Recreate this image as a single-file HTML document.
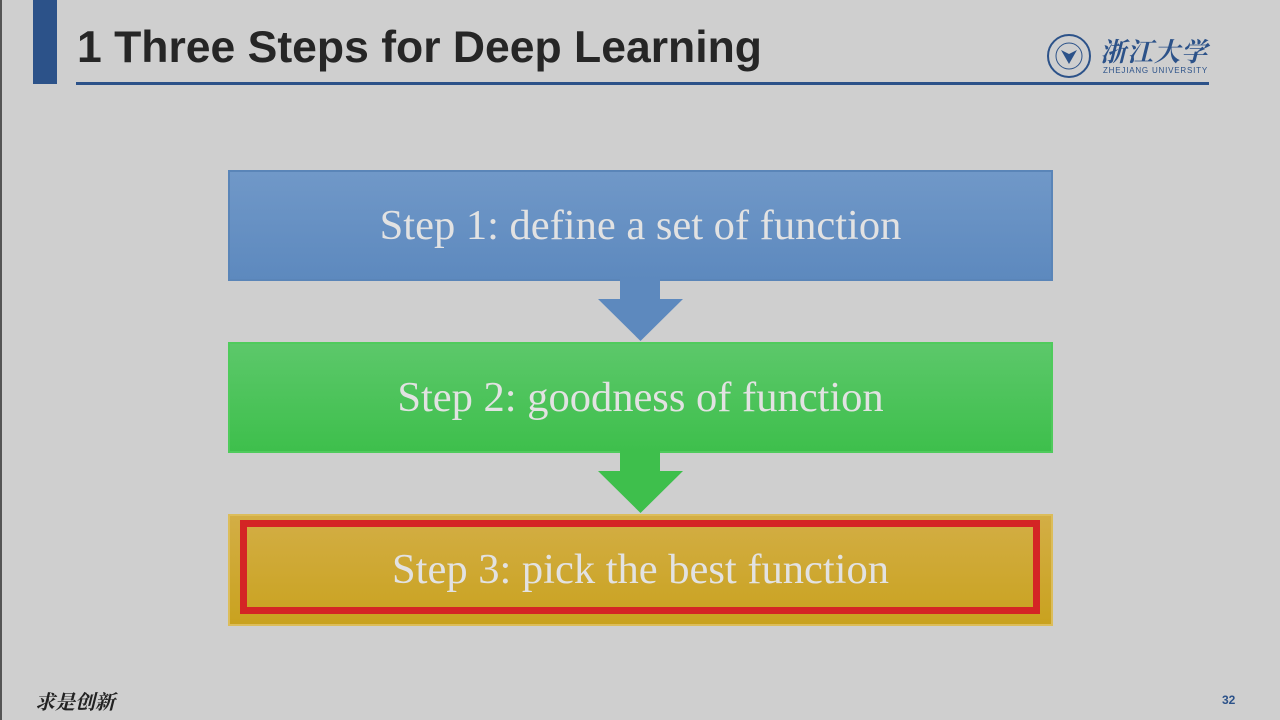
<!DOCTYPE html>
<html><head><meta charset="utf-8"><style>
body{margin:0;width:1280px;height:720px;background:#cfcfcf;position:relative;overflow:hidden;font-family:"Liberation Sans",sans-serif}
.a{position:absolute}
.box{position:absolute;left:228px;width:825px;height:111px;font-family:"Liberation Serif",serif;font-size:42.5px;color:#e2e2e2;text-align:center;line-height:108px;box-sizing:border-box}
</style></head><body>
<div class="a" style="left:0;top:0;width:2px;height:720px;background:#555"></div>
<div class="a" style="left:33px;top:0;width:24px;height:84px;background:#2c5289"></div>
<div class="a" style="left:77px;top:23px;font-size:44.5px;font-weight:bold;color:#262626;letter-spacing:0">1 Three Steps for Deep Learning</div>
<div class="a" style="left:76px;top:82px;width:1133px;height:3px;background:#2c5289"></div>
<svg class="a" style="left:1045px;top:32px" width="48" height="48" viewBox="0 0 48 48"><circle cx="24" cy="24" r="21" fill="none" stroke="#2c5289" stroke-width="2"/><circle cx="24" cy="24" r="13" fill="none" stroke="#2c5289" stroke-width="1"/><path d="M16 18 L24 32 L32 18 L24 22Z" fill="#2c5289"/></svg>
<div class="a" style="left:1100px;top:32px;font-family:'Noto Serif CJK SC',serif;font-size:26px;font-style:italic;font-weight:bold;color:#2c5289;letter-spacing:1px">浙江大学</div>
<div class="a" style="left:1103px;top:66px;font-size:8px;color:#2c5289;letter-spacing:0.8px">ZHEJIANG UNIVERSITY</div>

<div class="box" style="top:170px;background:linear-gradient(#7098c8,#5d89be);border:2px solid #5a85b8">Step 1: define a set of function</div>
<svg class="a" style="left:597px;top:278px" width="87" height="64"><path d="M23 0 H63 V21 H86 L43.5 63 L1 21 H23Z" fill="#5d89be"/></svg>
<div class="box" style="top:342px;background:linear-gradient(#5cc86a,#3ebf4c);border:2px solid #4fcb5c">Step 2: goodness of function</div>
<svg class="a" style="left:597px;top:450px" width="87" height="64"><path d="M23 0 H63 V21 H86 L43.5 63 L1 21 H23Z" fill="#3ebf4c"/></svg>
<div class="box" style="top:514px;height:112px;background:linear-gradient(#d3ae45,#c9a21f);border:2px solid #dcbd5a;line-height:108px">Step 3: pick the best function</div>
<div class="a" style="left:240px;top:520px;width:800px;height:94px;border:7px solid #d42525;box-sizing:border-box"></div>

<div class="a" style="left:35px;top:686px;font-family:'Noto Serif CJK SC',serif;font-size:20px;font-style:italic;font-weight:bold;color:#222">求是创新</div>
<div class="a" style="left:1222px;top:693px;font-size:12px;font-weight:bold;color:#2c5289">32</div>
</body></html>
